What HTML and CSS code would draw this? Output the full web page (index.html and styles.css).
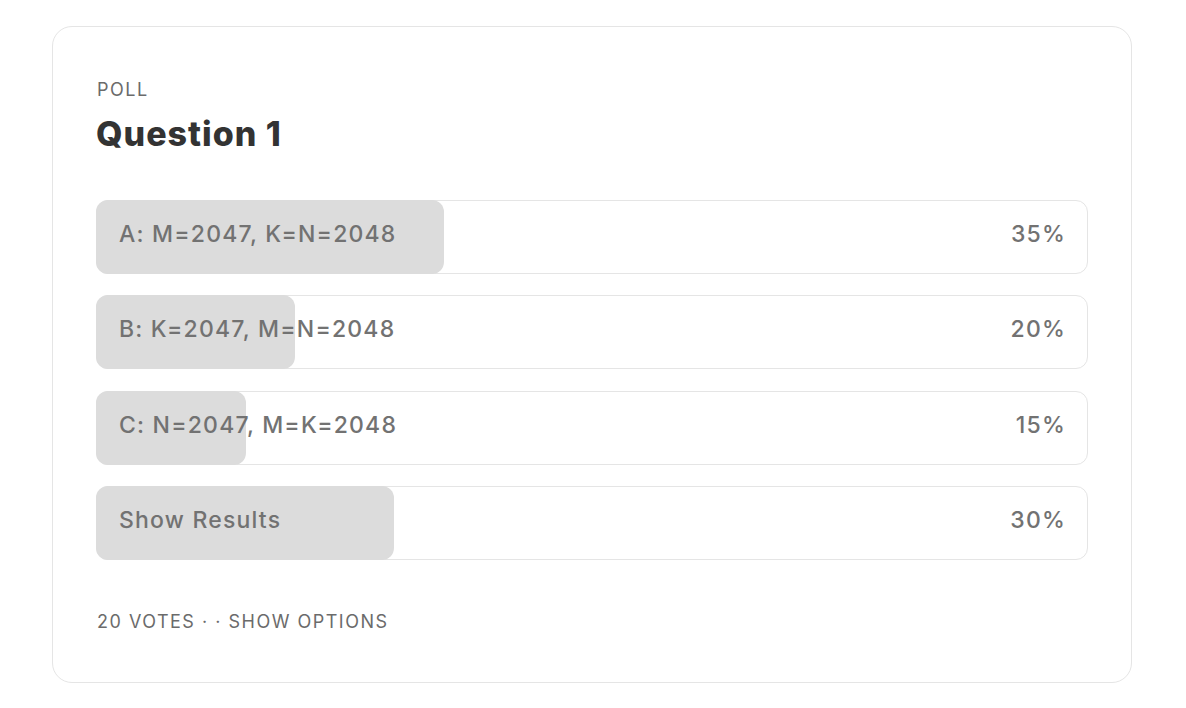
FILE: index.html
```html
<!DOCTYPE html>
<html>
<head>
<meta charset="utf-8">
<link rel="stylesheet" href="styles.css">
</head>
<body>
<div class="card">
  <div class="eyebrow">POLL</div>
  <h1 class="title">Question 1</h1>
  <div class="options">
    <div class="option">
      <div class="fill" style="width: calc(35% + 1px)"></div>
      <span class="label">A: M=2047, K=N=2048</span>
      <span class="pct">35%</span>
    </div>
    <div class="option">
      <div class="fill" style="width: calc(20% + 1px)"></div>
      <span class="label">B: K=2047, M=N=2048</span>
      <span class="pct">20%</span>
    </div>
    <div class="option">
      <div class="fill" style="width: calc(15% + 1px)"></div>
      <span class="label">C: N=2047, M=K=2048</span>
      <span class="pct">15%</span>
    </div>
    <div class="option">
      <div class="fill" style="width: calc(30% + 1px)"></div>
      <span class="label">Show Results</span>
      <span class="pct">30%</span>
    </div>
  </div>
  <div class="footer">20 VOTES · · SHOW OPTIONS</div>
</div>
</body>
</html>
```

FILE: styles.css
```css
html, body {
  margin: 0;
  padding: 0;
  background: #ffffff;
}
body {
  font-family: Inter, "Noto Sans", "Liberation Sans", sans-serif;
  padding: 26px 54px 0 52px;
}
.card {
  box-sizing: border-box;
  width: 1080px;
  height: 657px;
  border: 1px solid #e5e5e5;
  border-radius: 20px;
  padding: 0 43px 0 44px;
  display: flex;
  flex-direction: column;
}
.eyebrow {
  margin-top: 52px;
  font-size: 18px;
  line-height: 22px;
  letter-spacing: 1.5px;
  color: #6b6b6b;
}
.title {
  margin: 11px 0 0 -1px;
  font-size: 34px;
  line-height: 44px;
  font-weight: 800;
  letter-spacing: 1px;
  color: #333333;
}
.options {
  margin: 44px 0 0 -1px;
  display: flex;
  flex-direction: column;
  gap: 21.33px;
}
.option {
  position: relative;
  box-sizing: border-box;
  height: 74px;
  border: 1px solid #e5e5e5;
  border-radius: 12px;
  display: flex;
  align-items: center;
  justify-content: space-between;
  padding: 0 21px 6px 22px;
}
.fill {
  position: absolute;
  top: -1px;
  bottom: -1px;
  left: -1px;
  background: #dcdcdc;
  border-radius: 12px;
}
.label, .pct {
  position: relative;
  font-size: 23px;
  font-weight: 500;
  letter-spacing: 1.2px;
  color: #727272;
}
.footer {
  margin-top: 51px;
  font-size: 18px;
  line-height: 22px;
  letter-spacing: 1.5px;
  color: #6b6b6b;
}
```
